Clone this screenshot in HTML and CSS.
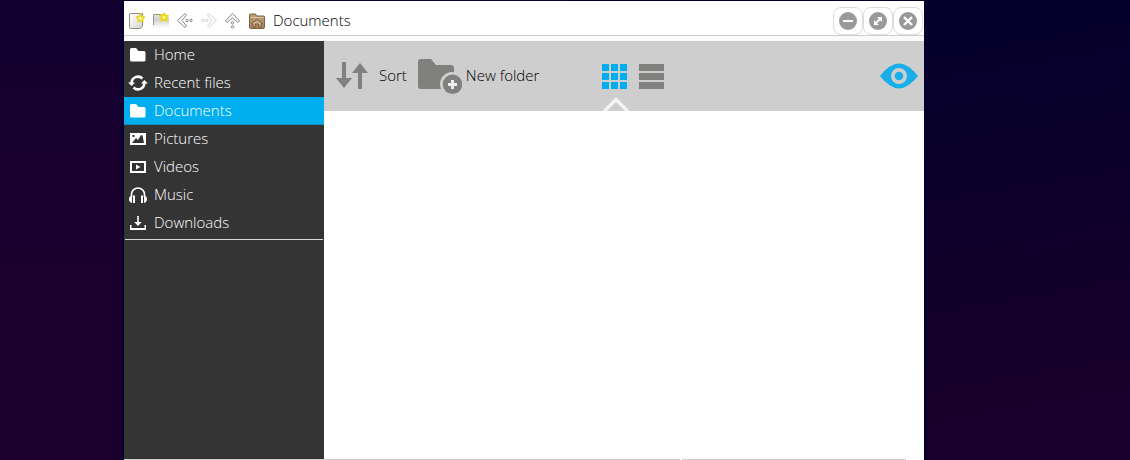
FILE: index.html
```html
<!DOCTYPE html>
<html lang="en">
<head>
<meta charset="utf-8">
<title>Documents</title>
<link rel="stylesheet" href="styles.css">
</head>
<body>
<main class="window">
  <header class="titlebar">
    <nav class="nav-tools" aria-label="Navigation">
      <button class="tool" aria-label="New file"><svg viewBox="0 0 16 16"><defs><linearGradient id="paper" x2="1" y2="1"><stop stop-color="#fff"/><stop offset="1" stop-color="#d4d4d0"/></linearGradient></defs><path d="M1 .5h12.500V13l-2 2.500H1.500Q.5 15.500.5 14.500V1Z" fill="url(#paper)" stroke="#90908b"/><path d="m11.500 1.500 1.200 2 2.300.5-1.500 2 .2 2.300-2.200-.8-2.200.8.200-2.300-1.500-2 2.300-.5z" fill="#fffbd5" stroke="#ead51b" stroke-width="1.700"/></svg></button>
      <button class="tool" aria-label="New tab"><svg viewBox="0 0 16 16"><defs><linearGradient id="tab" x2="0" y2="1"><stop stop-color="#e4e4e2"/><stop offset=".4" stop-color="#d1d1ce"/><stop offset="1" stop-color="#fff"/></linearGradient></defs><path d="M0 15V2q0-1 1-1h9v3h6v11z" fill="url(#tab)"/><path d="M.5 12V2q0-.5.5-.5h7" fill="none" stroke="#93938d"/><path d="m11 .5 1.300 2 2.400.5-1.500 2.100.2 2.500-2.400-.9-2.400.9.200-2.500L7.300 3l2.400-.5z" fill="#fff58b" stroke="#ead51b" stroke-width="1.900"/></svg></button>
      <button class="tool" aria-label="Back"><svg viewBox="0 0 16 16" class="arrow"><path d="M8 .5.5 7.500l7.500 7L9.500 13 5 7.500 9.500 2z"/><circle cx="10" cy="7.500" r="1.200"/><circle cx="14" cy="7.500" r="1.200"/></svg></button>
      <button class="tool" aria-label="Forward" disabled><svg viewBox="0 0 16 16" class="arrow"><path d="m8 .5 7.500 7-7.500 7L6.500 13 11 7.500 6.500 2z"/><circle cx="6" cy="7.500" r="1.200"/><circle cx="2" cy="7.500" r="1.200"/></svg></button>
      <button class="tool" aria-label="Up"><svg viewBox="0 0 16 16" class="arrow"><path d="m.5 8 7-7.500 7 7.500L13 9.500 7.500 5 2 9.500z"/><circle cx="7.500" cy="9.800" r="1.200"/><circle cx="7.500" cy="13.800" r="1.200"/></svg></button>
      <svg class="place-icon" viewBox="0 0 16 16" aria-hidden="true"><defs><linearGradient id="brown" x2="0" y2="1"><stop stop-color="#bda17a"/><stop offset="1" stop-color="#a5845b"/></linearGradient></defs><path d="M.5 14V2q0-1 1-1h5l1 2h7q1 0 1 1v10q0 1.500-1.500 1.500H2Q.5 15.500.5 14z" fill="url(#brown)" stroke="#7d6142"/><path d="M2 4.500h12.500" stroke="#dcc7a3"/><path d="m2.500 10.500 5.500-4 5.500 4-1.500.5v3H9.500v-3h-3v3H4v-3z" fill="#c7ad85" stroke="#705336" stroke-width=".8"/></svg>
    </nav>
    <h1 class="title label">Documents</h1>
    <div class="window-controls">
      <button class="control" aria-label="Minimize"><svg viewBox="0 0 18 18"><circle cx="9" cy="9" r="9" fill="#999"/><path d="M4 9h10" stroke="#fff" stroke-width="2"/></svg></button>
      <button class="control" aria-label="Maximize"><svg viewBox="0 0 18 18"><circle cx="9" cy="9" r="9" fill="#999"/><path d="m6.500 11.500 5-5" stroke="#fff" stroke-width="2"/><path d="M8 5h5v5zM5 8v5h5z" fill="#fff"/></svg></button>
      <button class="control" aria-label="Close"><svg viewBox="0 0 18 18"><circle cx="9" cy="9" r="9" fill="#999"/><path d="m5 5 8 8m0-8-8 8" stroke="#fff" stroke-width="2.400"/></svg></button>
    </div>
  </header>
  <div class="workspace">
    <aside class="sidebar">
      <nav class="places" aria-label="Places">
        <a class="place" href="#home"><svg viewBox="0 0 20 20"><path d="M2 15.500v-11Q2 3 3.500 3H8l2.500 3H16q1.500 0 1.500 1.500v7.500q0 1.500-1.500 1.500H3.500Q2 16.500 2 15z"/></svg><span class="label">Home</span></a>
        <a class="place" href="#recent"><svg viewBox="0 0 20 20"><path d="M3.600 10A6.400 6.400 0 0 1 14.500 5.500M16.400 10A6.400 6.400 0 0 1 5.500 14.500" fill="none" stroke="#fff" stroke-width="2.600"/><path d="M0 9.500h7L3.700 13zM13 10.500h7L16.300 7z"/></svg><span class="label">Recent files</span></a>
        <a class="place selected" href="#documents" aria-current="page"><svg viewBox="0 0 20 20"><path d="M2 15.500v-11Q2 3 3.500 3H8l2.500 3H16q1.500 0 1.500 1.500v7.500q0 1.500-1.500 1.500H3.500Q2 16.500 2 15z"/></svg><span class="label">Documents</span></a>
        <a class="place" href="#pictures"><svg viewBox="0 0 20 20"><path fill-rule="evenodd" d="M2 4h16v12H2zM4 14h12l-1.500-7.500-1.500-.5-3 5-2-2zM4.500 6v2h2V6z"/></svg><span class="label">Pictures</span></a>
        <a class="place" href="#videos"><svg viewBox="0 0 20 20"><path fill-rule="evenodd" d="M2 4h16v12H2zM4 6v8h12V6z"/><path d="m8 7.500 4.500 2.500L8 12.500z"/></svg><span class="label">Videos</span></a>
        <a class="place" href="#music"><svg viewBox="0 0 20 20"><path d="M3.500 12V9.500a6.500 6.500 0 0 1 13 0V12" fill="none" stroke="#fff" stroke-width="1.600"/><path d="M4 10.500V18Q1 17 1 14t3-3.500zM16 10.500V18q3-1 3-4t-3-3.500zM5 10.500h2V18H5zM13 10.500h2V18h-2z"/></svg><span class="label">Music</span></a>
        <a class="place" href="#downloads"><svg viewBox="0 0 20 20"><path d="M2 12h1.500v3h13v-3H18v5H2zM9.200 3h1.600v6h3L10 13 6.200 9h3z"/></svg><span class="label">Downloads</span></a>
      </nav>
    </aside>
    <section class="content">
      <div class="toolbar">
        <button class="action sort"><svg viewBox="0 0 32 28" width="32" height="28"><path d="M6 0h4v16h6L8 26 0 16h6zM22 27V11h-6l8-10 8 10h-6v16z"/></svg><span class="label">Sort</span></button>
        <button class="action folder"><svg viewBox="0 0 44 36" width="44" height="36"><path d="M0 28V4q0-3 3-3h10l5 6h15q3 0 3 3v21H3q-3 0-3-3z"/><circle cx="34" cy="26" r="12" fill="#cecece"/><circle cx="34.500" cy="26.300" r="9.700"/><path d="M34.500 22v9M30 26.500h9" stroke="#eee" stroke-width="3"/></svg><span class="label">New folder</span></button>
        <div class="views">
          <button class="view active" aria-label="Grid view" aria-pressed="true"><svg viewBox="0 0 25 25" width="25" height="25"><path d="M0 0h7v7H0zM9 0h7v7H9zM18 0h7v7h-7zM0 9h7v7H0zM9 9h7v7H9zM18 9h7v7h-7zM0 18h7v7H0zM9 18h7v7H9zM18 18h7v7h-7z"/></svg><svg class="pointer" viewBox="0 0 26 14" width="26" height="14"><path d="M1 14.500 13 2.500l12 12" fill="none" stroke="#f5f5f5" stroke-width="3.400"/></svg></button>
          <button class="view" aria-label="List view" aria-pressed="false"><svg viewBox="0 0 25 25" width="25" height="25"><path d="M0 0h25v7H0zM0 9h25v7H0zM0 18h25v7H0z"/></svg></button>
        </div>
        <button class="preview" aria-label="Show preview"><svg viewBox="0 0 38 26" width="38" height="26"><path fill-rule="evenodd" d="M0 13Q10 .5 19 .5T38 13Q28 25.500 19 25.500T0 13zM27 13a8 8 0 1 0-16 0 8 8 0 0 0 16 0z"/><circle cx="19" cy="13" r="4.300"/></svg></button>
      </div>
      <div class="files"></div>
    </section>
  </div>
  <footer class="status"><span class="status-main"></span><span class="status-side"></span></footer>
</main>
</body>
</html>
```
FILE: styles.css
```css
* { box-sizing: border-box; }
body {
  margin: 0;
  min-height: 100vh;
  display: flex;
  padding: 1px 206px 0 124px;
  background:
    linear-gradient(#120030, #1b002d 60%, #1b002c) left / 50% 100% no-repeat,
    linear-gradient(170deg, #03002c, #07002b 35%, #14002a 70%, #19002a) right / 50% 100% no-repeat;
  font: 300 15px/20px "Open Sans", "Noto Sans", sans-serif;
  color: #000;
}
button { margin: 0; padding: 0; border: 0; background: none; color: inherit; font: inherit; }
svg { display: block; flex: none; }
.window { flex: 1; display: flex; flex-direction: column; background: #fff; box-shadow: -2px 0 #03002f, 2px 0 #03002f; }
.titlebar { height: 35px; display: flex; align-items: center; padding: 6px 1px 0 5px; border-bottom: 1px solid #cecece; }
.nav-tools { display: flex; gap: 8px; }
.tool, .tool svg, .place-icon { width: 16px; height: 16px; }
.arrow { fill: #fff; stroke: #858585; stroke-width: 1; }
.tool:disabled { opacity: .35; }
.title { margin: 0 auto 0 8px; font: inherit; }
.label { padding-bottom: 2px; }
.window-controls { display: flex; }
.control { width: 30px; height: 28px; display: grid; place-items: center; border: 1px solid #ddd; border-radius: 8px; }
.control svg { width: 18px; height: 18px; }
.workspace { flex: 1; display: flex; border-top: 5px solid #fafafa; }
.sidebar { width: 200px; flex: none; background: #343434; }
.places { padding-bottom: 2px; margin: 0 1px; border-bottom: 1px solid #d8d8d8; }
.place { height: 28px; margin: 0 -1px; padding: 0 4px; display: flex; align-items: center; gap: 6px; color: #fff; text-decoration: none; }
.place svg { width: 20px; height: 20px; fill: #fff; }
.selected { background: #00aef0; box-shadow: inset 0 -1px #158fc0; }
.content { flex: 1; display: flex; flex-direction: column; }
.toolbar { height: 70px; display: flex; align-items: center; padding: 0 6px 0 12px; background: #cecece; fill: #80807e; }
.action { display: flex; align-items: center; }
.sort { gap: 11px; margin-right: 11px; }
.folder { gap: 4px; }
.views { height: 100%; display: flex; gap: 12px; margin: 0 auto 0 63px; }
.view { position: relative; display: flex; align-items: center; }
.active { fill: #00aef0; }
.pointer { position: absolute; left: 1px; bottom: 0; }
.preview { fill: #18aee9; }
.files { flex: 1; }
.status { height: 1px; display: flex; gap: 2px; padding-right: 18px; }
.status span { background: #cecece; }
.status-main { flex: 556; }
.status-side { flex: 224; }
```
